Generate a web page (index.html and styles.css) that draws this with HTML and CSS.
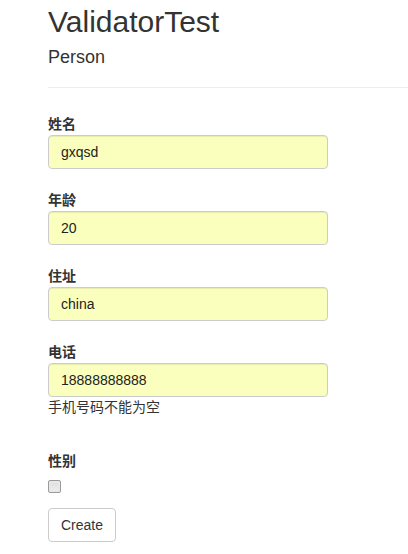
FILE: index.html
```html
<!DOCTYPE html>
<html lang="en">
<head>
  <meta charset="UTF-8" />
  <meta name="viewport" content="width=device-width, initial-scale=1" />
  <title>ValidatorTest</title>
  <link rel="stylesheet" href="styles.css">
</head>
<body>

  <div class="container">
    <h2>ValidatorTest</h2>
    <h4>Person</h4>
    <hr />

    <form id="person-form">
      <div class="form-group">
        <label for="name">姓名</label>
        <input type="text" id="name" class="form-control" value="gxqsd" />
      </div>

      <div class="form-group">
        <label for="age">年龄</label>
        <input type="text" id="age" class="form-control" value="20" />
      </div>

      <div class="form-group">
        <label for="address">住址</label>
        <input type="text" id="address" class="form-control" value="china" />
      </div>

      <div class="form-group">
        <label for="phone">电话</label>
        <input type="text" id="phone" class="form-control" value="18888888888" />
        <span class="field-error">手机号码不能为空</span>
      </div>

      <div class="form-group">
        <label for="sex">性别</label>
        <input type="checkbox" id="sex" class="check-box" />
      </div>

      <div class="form-group">
        <button type="submit" class="btn">Create</button>
      </div>
    </form>
  </div>

</body>
</html>
```

FILE: styles.css
```css
body {
  font-family: "Liberation Sans", Arial, "Noto Sans CJK SC", sans-serif;
  font-size: 14px;
  line-height: 20px;
  color: #333;
  background: #fff;
  margin: 0;
  padding: 0;
}

.container {
  padding: 5px 0 0 48px;
}

h2 {
  font-size: 30px;
  font-weight: normal;
  line-height: 33px;
  margin: 0;
}

h4 {
  font-size: 18px;
  font-weight: normal;
  line-height: 20px;
  margin: 9px 0 0;
}

hr {
  border: 0;
  border-top: 1px solid #eee;
  margin: 20px 0 20px;
}

.form-group {
  margin-bottom: 15px;
}

.form-group label {
  display: block;
  font-weight: bold;
  padding-top: 6px;
  margin-bottom: 1px;
}

.form-control {
  display: block;
  box-sizing: border-box;
  width: 280px;
  height: 34px;
  padding: 6px 12px;
  font-family: inherit;
  font-size: 14px;
  color: #222;
  background: #faffbd;
  border: 1px solid #ccc;
  border-radius: 4px;
  box-shadow: inset 0 1px 1px rgba(0,0,0,0.075);
  margin: 0;
}

.field-error {
  display: block;
  padding-bottom: 13px;
  color: #333;
}

.check-box {
  appearance: none;
  -webkit-appearance: none;
  display: block;
  width: 13px;
  height: 13px;
  margin: 9px 0 0;
  border: 1px solid #9a9a9a;
  border-radius: 2px;
  background: linear-gradient(#dcdcdc, #f0f0f0);
  box-shadow: inset 0 0 0 2px #e8e8e8;
}

.btn {
  font-family: inherit;
  font-size: 14px;
  color: #333;
  background: #fff;
  border: 1px solid #ccc;
  border-radius: 4px;
  height: 34px;
  padding: 6px 12px;
  cursor: pointer;
}

.btn:hover {
  background: #e6e6e6;
}
```
